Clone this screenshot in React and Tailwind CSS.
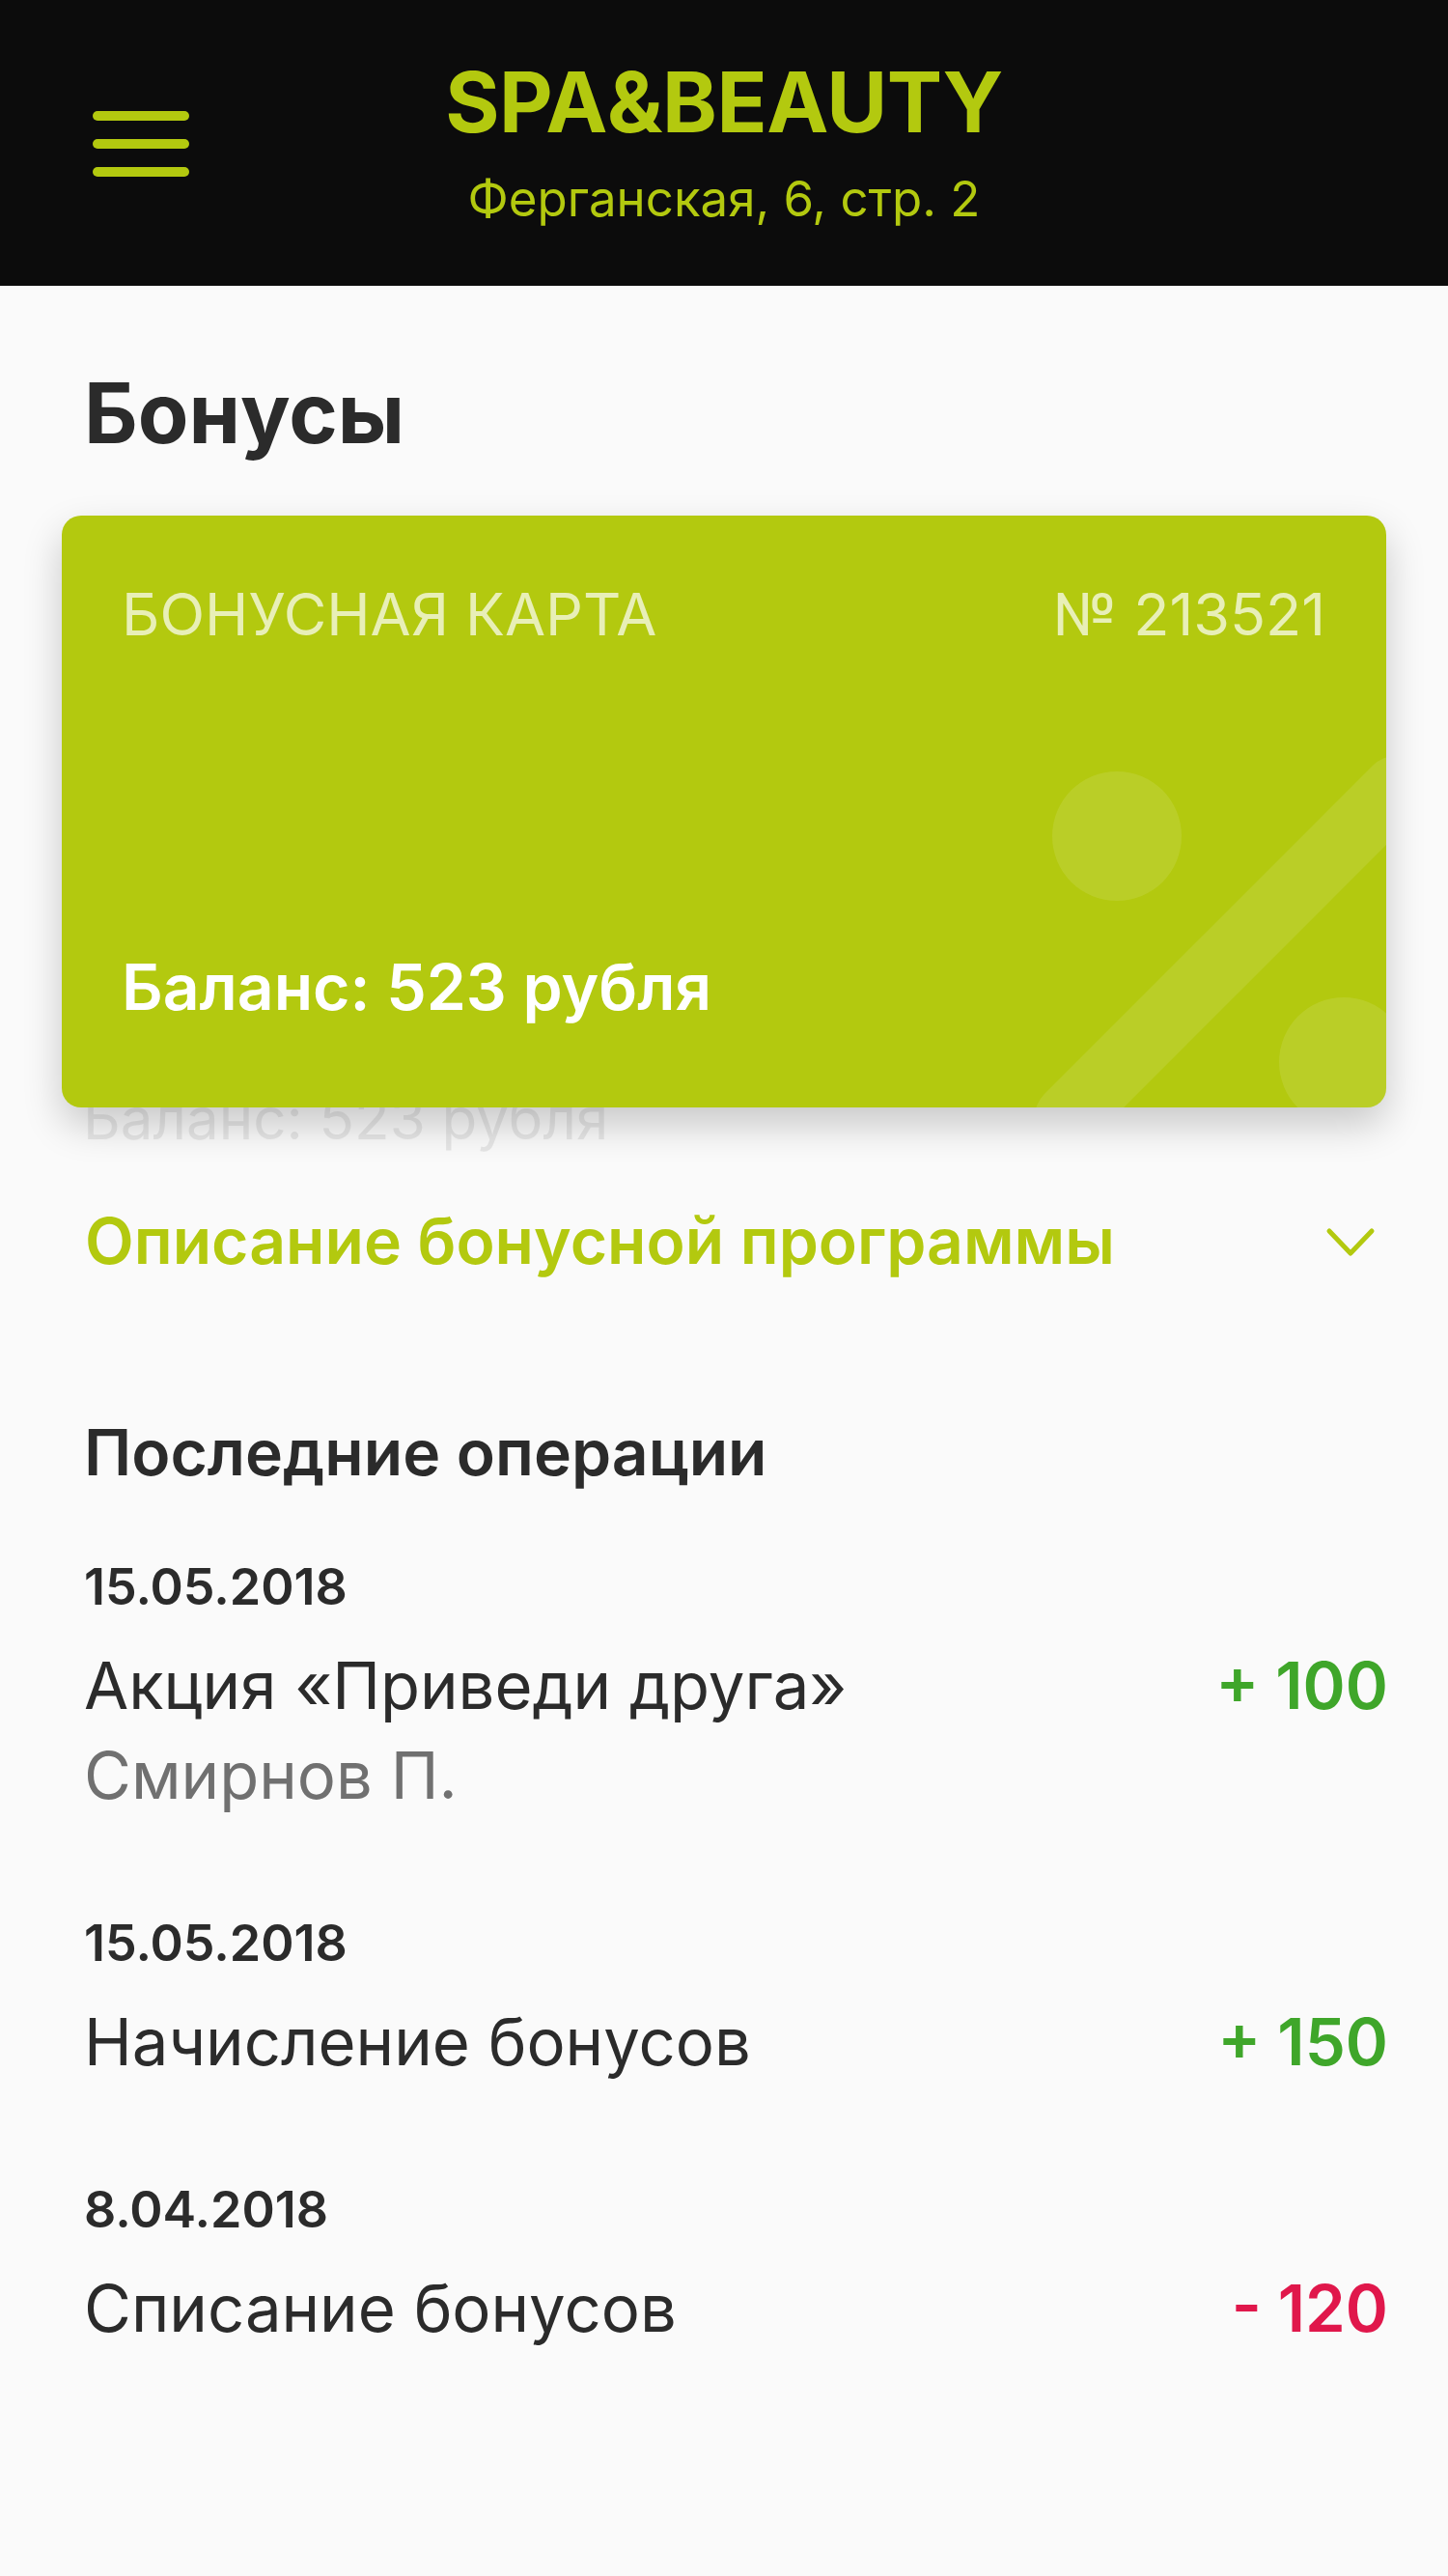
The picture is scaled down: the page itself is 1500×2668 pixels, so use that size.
import React from "react";

const operations = [
  { date: "15.05.2018", title: "Акция «Приведи друга»", note: "Смирнов П.", amount: "+ 100", positive: true },
  { date: "15.05.2018", title: "Начисление бонусов", amount: "+ 150", positive: true },
  { date: "8.04.2018", title: "Списание бонусов", amount: "- 120", positive: false },
];

function Hamburger() {
  return (
    <div className="flex flex-col gap-[19px]">
      <span className="block w-[100px] h-[10px] rounded-full bg-[#b3c90f]" />
      <span className="block w-[100px] h-[10px] rounded-full bg-[#b3c90f]" />
      <span className="block w-[100px] h-[10px] rounded-full bg-[#b3c90f]" />
    </div>
  );
}

function BonusCard() {
  return (
    <div className="relative z-10 mx-[64px] h-[613px] overflow-hidden rounded-[20px] bg-[#b3c90f] shadow-[0_18px_40px_rgba(0,0,0,0.2)]">
      {/* percent sign in the background */}
      <svg className="absolute inset-0" width="1372" height="613" viewBox="0 0 1372 613">
        <circle cx="1093" cy="332" r="67" fill="rgba(255,255,255,0.1)" />
        <circle cx="1328" cy="566" r="67" fill="rgba(255,255,255,0.1)" />
        <line x1="1042" y1="623" x2="1382" y2="283" stroke="rgba(255,255,255,0.1)" strokeWidth="68" strokeLinecap="round" />
      </svg>
      <div className="relative flex h-full flex-col justify-between pl-[62px] pr-[63px] pt-[72px] pb-[92px]">
        <div className="flex justify-between text-[61px] leading-none text-white/70">
          <span>БОНУСНАЯ КАРТА</span>
          <span>№ 213521</span>
        </div>
        <div className="text-[66px] font-semibold leading-none text-white">Баланс: 523 рубля</div>
      </div>
    </div>
  );
}

export default function App() {
  return (
    <div className="min-h-[2668px] bg-[#fafafa] font-[Inter,sans-serif]">
      <header className="grid h-[296px] grid-cols-[1fr_auto_1fr] bg-[#0c0c0c]">
        <div className="flex items-center pl-[96px] pt-[2px]">
          <Hamburger />
        </div>
        <div className="flex flex-col items-center pt-[63px]">
          <h1 className="text-[86px] font-bold leading-none tracking-[-0.5px] text-[#b3c90f]">SPA&amp;BEAUTY</h1>
          <p className="mt-[31px] text-[51px] leading-none text-[#b3c90f]">Ферганская, 6, стр. 2</p>
        </div>
        <div />
      </header>

      <main className="pt-[89px]">
        <h2 className="pl-[87px] text-[86px] font-bold leading-none text-[#2b2b2b]">Бонусы</h2>

        <div className="mt-[63px]">
          <BonusCard />
          <div className="relative -mt-[19px] pl-[86px] text-[60px] leading-none text-[#e6e6e6]">Баланс: 523 рубля</div>
        </div>

        <button className="mt-[64px] flex w-full items-center justify-between pl-[88px] pr-[75px] text-left">
          <span className="text-[66px] font-semibold leading-none text-[#b3c90f]">Описание бонусной программы</span>
          <svg width="52" height="32" viewBox="0 0 52 32" className="mt-[4px]">
            <path d="M4 4 L26 27 L48 4" fill="none" stroke="#b3c90f" strokeWidth="5" strokeLinecap="round" strokeLinejoin="round" />
          </svg>
        </button>

        <section className="pl-[87px] pr-[62px]">
          <h3 className="mt-[153px] text-[66px] font-semibold leading-none text-[#2b2b2b]">Последние операции</h3>
          <div className="mt-[81px] flex flex-col gap-[115px]">
            {operations.map((op, i) => (
              <div key={i}>
                <div className="text-[52px] font-semibold leading-none text-[#2b2b2b]">{op.date}</div>
                <div className="mt-[42px] flex items-start justify-between">
                  <div>
                    <div className="text-[67px] leading-none text-[#2b2b2b]">{op.title}</div>
                    {op.note && <div className="mt-[26px] text-[67px] leading-none text-[#707070]">{op.note}</div>}
                  </div>
                  <div
                    className={
                      op.positive
                        ? "text-[67px] font-semibold leading-none text-[#3fa62a]"
                        : "text-[67px] font-semibold leading-none text-[#e0174b]"
                    }
                  >
                    {op.amount}
                  </div>
                </div>
              </div>
            ))}
          </div>
        </section>
      </main>
    </div>
  );
}
